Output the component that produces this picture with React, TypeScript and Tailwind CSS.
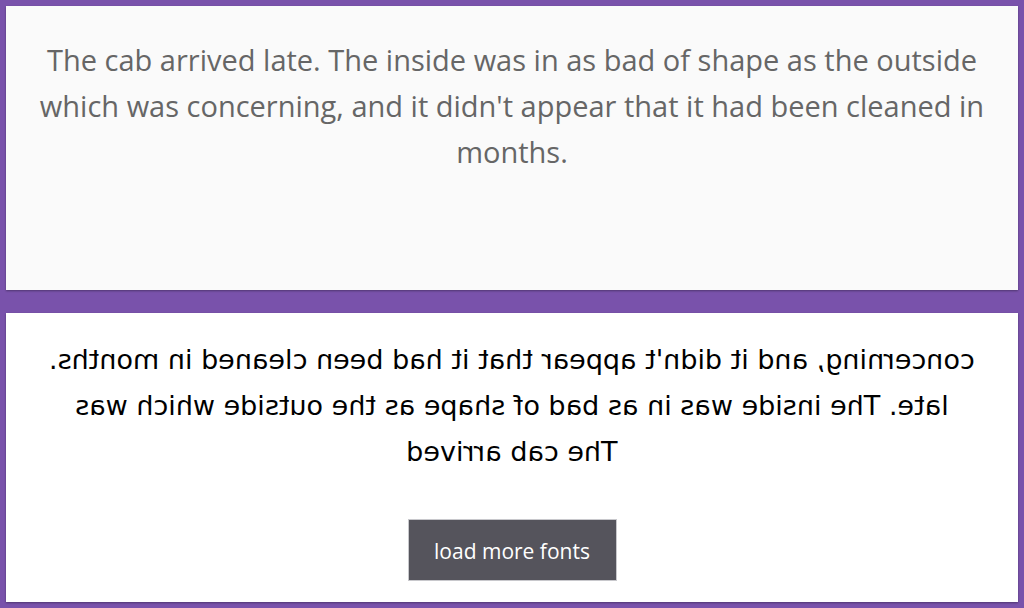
export default function App() {
  return (
    <div className="h-[608px] bg-[#7952ab] p-[6px] flex flex-col gap-[23px] overflow-hidden">
      {/* Preview card */}
      <div className="h-[284px] shrink-0 bg-[#fafafa] shadow-[0_1px_2px_rgba(0,0,0,0.35)] pt-[31px] text-center text-[#666666] text-[29px] leading-[46px] font-['Open_Sans',sans-serif]">
        <span className="block">The cab arrived late. The inside was in as bad of shape as the outside</span>
        <span className="block">which was concerning, and it didn't appear that it had been cleaned in</span>
        <span className="block">months.</span>
      </div>

      {/* Mirrored sample */}
      <div className="flex-1 bg-white shadow-[0_1px_2px_rgba(0,0,0,0.35)] pt-[24px] flex flex-col items-center">
        <div className="-scale-x-100 text-center text-black text-[27px] leading-[46px] font-['DejaVu_Sans',sans-serif]">
          <span className="block">concerning, and it didn't appear that it had been cleaned in months.</span>
          <span className="block">late. The inside was in as bad of shape as the outside which was</span>
          <span className="block">The cab arrived</span>
        </div>
        <button className="mt-[44px] w-[209px] h-[62px] pt-[4px] bg-[#55545c] border border-[#c8c8cc] text-white text-[21px] font-['Open_Sans',sans-serif]">
          load more fonts
        </button>
      </div>
    </div>
  )
}
